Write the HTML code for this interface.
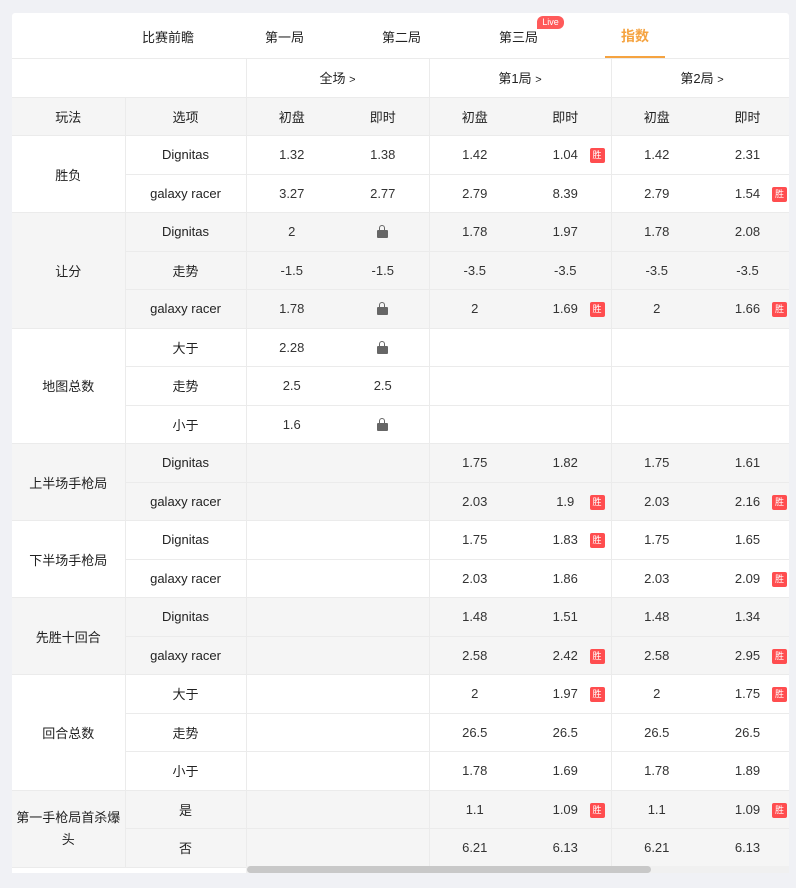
<!DOCTYPE html>
<html><head><meta charset="utf-8">
<style>
body{margin:0;background:#f0f1f5;font-family:"Liberation Sans","Noto Sans CJK SC",sans-serif;color:#333;}
.card{position:absolute;left:12px;top:13px;width:777px;height:860px;background:#fff;overflow:hidden;border-radius:3px 3px 0 0;}
.tabs{position:absolute;left:0;top:0;width:777px;height:45px;border-bottom:1px solid #e8e8e8;}
.tab{position:absolute;top:14px;font-size:13px;color:#222;}
.tab.act{color:#f5a340;font-size:14px;top:13px;font-weight:bold}
.ul{position:absolute;left:593px;top:43px;width:60px;height:2px;background:#f5a340}
.live{position:absolute;left:525px;top:3px;width:27px;height:13px;border-radius:6px 6px 6px 0;background:#ff5a5a;color:#fff;font-size:9px;line-height:13px;text-align:center}
table{position:absolute;left:0;top:45px;border-collapse:collapse;table-layout:fixed;width:781px;font-size:13px;}
td{border:1px solid #ebebeb;text-align:center;height:37.5px;padding:0;position:relative;color:#333}
tr.h td{background:#fff;color:#222}
tr.h2 td{background:#f5f5f5;color:#222}
tr.g td{background:#f5f5f5}
td.n{border-left:none;border-right:none}
td.l{border-right:none}
.b{position:absolute;right:6px;top:12px;width:15px;height:15px;background:#ff4d4f;color:#fff;font-size:9px;line-height:15px;border-radius:2px;text-align:center}
.lk{display:inline-block;width:11px;height:8px;background:#666;border-radius:1px;position:relative;top:2px}
.lk:before{content:"";position:absolute;left:2px;top:-5px;width:4px;height:5px;border:1.5px solid #666;border-bottom:none;border-radius:3px 3px 0 0}
td.lab{color:#222}
.sb{position:absolute;left:234px;top:853px;width:543px;height:7px;background:#f0f0f0}
.th{position:absolute;left:235px;top:853px;width:404px;height:7px;background:#c8c8c8;border-radius:4px}
.ch{font-size:11px}
</style></head><body>
<div class="card">
<div class="tabs">
<span class="tab" style="left:130px">比赛前瞻</span>
<span class="tab" style="left:253px">第一局</span>
<span class="tab" style="left:370px">第二局</span>
<span class="tab" style="left:487px">第三局</span>
<span class="live">Live</span>
<span class="tab act" style="left:609px">指数</span>
<div class="ul"></div>
</div>
<table>
<colgroup><col style="width:113px"><col style="width:121px"><col style="width:91px"><col style="width:92px"><col style="width:91px"><col style="width:91px"><col style="width:91px"><col style="width:91px"></colgroup>
<tr class="h"><td colspan="2" style="border-left:none"></td><td colspan="2">全场 <span class="ch">&gt;</span></td><td colspan="2">第1局 <span class="ch">&gt;</span></td><td colspan="2">第2局 <span class="ch">&gt;</span></td></tr>
<tr class="h2"><td style="border-left:none">玩法</td><td>选项</td><td class="l">初盘</td><td class="n">即时</td><td class="l">初盘</td><td class="n">即时</td><td class="l">初盘</td><td class="n">即时</td></tr>

<tr><td rowspan="2" class="lab" style="border-left:none">胜负</td><td class="lab">Dignitas</td><td class="l">1.32</td><td class="n">1.38</td><td class="l">1.42</td><td class="n">1.04<span class="b">胜</span></td><td class="l">1.42</td><td class="n">2.31</td></tr>
<tr><td class="lab">galaxy racer</td><td class="l">3.27</td><td class="n">2.77</td><td class="l">2.79</td><td class="n">8.39</td><td class="l">2.79</td><td class="n">1.54<span class="b">胜</span></td></tr>

<tr class="g"><td rowspan="3" class="lab" style="border-left:none">让分</td><td class="lab">Dignitas</td><td class="l">2</td><td class="n"><span class="lk"></span></td><td class="l">1.78</td><td class="n">1.97</td><td class="l">1.78</td><td class="n">2.08</td></tr>
<tr class="g"><td class="lab">走势</td><td class="l">-1.5</td><td class="n">-1.5</td><td class="l">-3.5</td><td class="n">-3.5</td><td class="l">-3.5</td><td class="n">-3.5</td></tr>
<tr class="g"><td class="lab">galaxy racer</td><td class="l">1.78</td><td class="n"><span class="lk"></span></td><td class="l">2</td><td class="n">1.69<span class="b">胜</span></td><td class="l">2</td><td class="n">1.66<span class="b">胜</span></td></tr>

<tr><td rowspan="3" class="lab" style="border-left:none">地图总数</td><td class="lab">大于</td><td class="l">2.28</td><td class="n"><span class="lk"></span></td><td class="l"></td><td class="n"></td><td class="l"></td><td class="n"></td></tr>
<tr><td class="lab">走势</td><td class="l">2.5</td><td class="n">2.5</td><td class="l"></td><td class="n"></td><td class="l"></td><td class="n"></td></tr>
<tr><td class="lab">小于</td><td class="l">1.6</td><td class="n"><span class="lk"></span></td><td class="l"></td><td class="n"></td><td class="l"></td><td class="n"></td></tr>

<tr class="g"><td rowspan="2" class="lab" style="border-left:none">上半场手枪局</td><td class="lab">Dignitas</td><td class="l"></td><td class="n"></td><td class="l">1.75</td><td class="n">1.82</td><td class="l">1.75</td><td class="n">1.61</td></tr>
<tr class="g"><td class="lab">galaxy racer</td><td class="l"></td><td class="n"></td><td class="l">2.03</td><td class="n">1.9<span class="b">胜</span></td><td class="l">2.03</td><td class="n">2.16<span class="b">胜</span></td></tr>

<tr><td rowspan="2" class="lab" style="border-left:none">下半场手枪局</td><td class="lab">Dignitas</td><td class="l"></td><td class="n"></td><td class="l">1.75</td><td class="n">1.83<span class="b">胜</span></td><td class="l">1.75</td><td class="n">1.65</td></tr>
<tr><td class="lab">galaxy racer</td><td class="l"></td><td class="n"></td><td class="l">2.03</td><td class="n">1.86</td><td class="l">2.03</td><td class="n">2.09<span class="b">胜</span></td></tr>

<tr class="g"><td rowspan="2" class="lab" style="border-left:none">先胜十回合</td><td class="lab">Dignitas</td><td class="l"></td><td class="n"></td><td class="l">1.48</td><td class="n">1.51</td><td class="l">1.48</td><td class="n">1.34</td></tr>
<tr class="g"><td class="lab">galaxy racer</td><td class="l"></td><td class="n"></td><td class="l">2.58</td><td class="n">2.42<span class="b">胜</span></td><td class="l">2.58</td><td class="n">2.95<span class="b">胜</span></td></tr>

<tr><td rowspan="3" class="lab" style="border-left:none">回合总数</td><td class="lab">大于</td><td class="l"></td><td class="n"></td><td class="l">2</td><td class="n">1.97<span class="b">胜</span></td><td class="l">2</td><td class="n">1.75<span class="b">胜</span></td></tr>
<tr><td class="lab">走势</td><td class="l"></td><td class="n"></td><td class="l">26.5</td><td class="n">26.5</td><td class="l">26.5</td><td class="n">26.5</td></tr>
<tr><td class="lab">小于</td><td class="l"></td><td class="n"></td><td class="l">1.78</td><td class="n">1.69</td><td class="l">1.78</td><td class="n">1.89</td></tr>

<tr class="g"><td rowspan="2" class="lab" style="border-left:none;line-height:22px">第一手枪局首杀爆<br>头</td><td class="lab">是</td><td class="l"></td><td class="n"></td><td class="l">1.1</td><td class="n">1.09<span class="b">胜</span></td><td class="l">1.1</td><td class="n">1.09<span class="b">胜</span></td></tr>
<tr class="g"><td class="lab">否</td><td class="l"></td><td class="n"></td><td class="l">6.21</td><td class="n">6.13</td><td class="l">6.21</td><td class="n">6.13</td></tr>
</table>
<div class="sb"></div><div class="th"></div>
</div>
</body></html>
